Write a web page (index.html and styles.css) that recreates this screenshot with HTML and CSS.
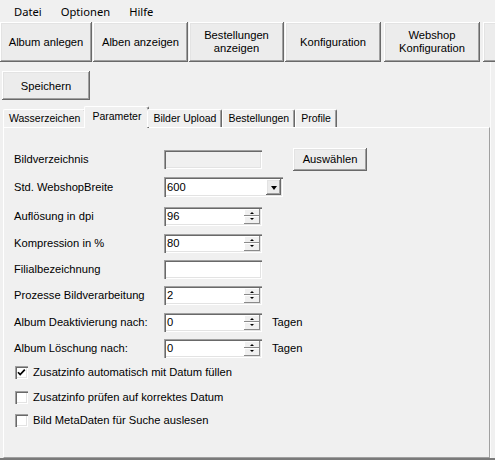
FILE: index.html
```html
<!DOCTYPE html>
<html lang="de">
<head>
<meta charset="utf-8">
<title>Konfiguration</title>
<link rel="stylesheet" href="styles.css">
</head>
<body>
<div class="app">
  <nav class="menubar">
    <span class="menu-item">Datei</span>
    <span class="menu-item">Optionen</span>
    <span class="menu-item">Hilfe</span>
  </nav>
  <div class="toolbar">
    <button class="raised tbtn tb1">Album anlegen</button>
    <button class="raised tbtn tb2">Alben anzeigen</button>
    <button class="raised tbtn tb3">Bestellungen<br>anzeigen</button>
    <button class="raised tbtn tb4">Konfiguration</button>
    <button class="raised tbtn tb5">Webshop<br>Konfiguration</button>
    <button class="raised tbtn tb6"></button>
  </div>
  <main class="content">
    <button class="raised btn save">Speichern</button>
    <div class="tabs">
      <div class="tab">Wasserzeichen</div>
      <div class="tab active">Parameter</div>
      <div class="tab">Bilder Upload</div>
      <div class="tab">Bestellungen</div>
      <div class="tab">Profile</div>
    </div>
    <section class="panel">
      <div class="row first">
        <span class="lbl">Bildverzeichnis</span>
        <div class="field text disabled"></div>
        <button class="raised btn pick">Auswählen</button>
      </div>
      <div class="row tall">
        <span class="lbl">Std. WebshopBreite</span>
        <div class="field combo"><span class="val">600</span><span class="raised dd"><span class="dd-arrow"></span></span></div>
      </div>
      <div class="row mt9">
        <span class="lbl">Auflösung in dpi</span>
        <div class="field spin"><span class="val">96</span><span class="spin-btns"><span class="sb up"></span><span class="sb down"></span></span></div>
      </div>
      <div class="row mt7">
        <span class="lbl">Kompression in %</span>
        <div class="field spin"><span class="val">80</span><span class="spin-btns"><span class="sb up"></span><span class="sb down"></span></span></div>
      </div>
      <div class="row">
        <span class="lbl">Filialbezeichnung</span>
        <div class="field text"></div>
      </div>
      <div class="row">
        <span class="lbl">Prozesse Bildverarbeitung</span>
        <div class="field spin"><span class="val">2</span><span class="spin-btns"><span class="sb up"></span><span class="sb down"></span></span></div>
      </div>
      <div class="row mt7">
        <span class="lbl">Album Deaktivierung nach:</span>
        <div class="field spin"><span class="val">0</span><span class="spin-btns"><span class="sb up"></span><span class="sb down"></span></span></div>
        <span class="unit">Tagen</span>
      </div>
      <div class="row">
        <span class="lbl">Album Löschung nach:</span>
        <div class="field spin"><span class="val">0</span><span class="spin-btns"><span class="sb up"></span><span class="sb down"></span></span></div>
        <span class="unit">Tagen</span>
      </div>
      <div class="row mt4">
        <span class="cb"><svg width="13" height="13" viewBox="0 0 13 13"><polyline points="3,6.2 5.2,8.6 9.8,3.6" fill="none" stroke="#000" stroke-width="1.7"/></svg></span>
        <span class="cb-label">Zusatzinfo automatisch mit Datum füllen</span>
      </div>
      <div class="row mt5">
        <span class="cb"></span>
        <span class="cb-label">Zusatzinfo prüfen auf korrektes Datum</span>
      </div>
      <div class="row mt3">
        <span class="cb"></span>
        <span class="cb-label">Bild MetaDaten für Suche auslesen</span>
      </div>
    </section>
  </main>
</div>
</body>
</html>
```
FILE: styles.css
```css
* { box-sizing: border-box; }
html, body { margin: 0; padding: 0; background: #f0f0f0; }
body {
  width: 495px; height: 460px; overflow: hidden;
  font-family: "Liberation Sans", Arial, sans-serif;
  font-size: 11.2px; color: #000;
}
button { font: inherit; color: inherit; border: 0; margin: 0; padding: 0; cursor: default; }

.app {
  height: 460px; display: flex; flex-direction: column;
  border-bottom: 2px solid #7a7a7a;
}

.raised {
  background: #ececec;
  box-shadow: inset -1px -1px 0 #696969, inset 1px 1px 0 #ffffff,
              inset -2px -2px 0 #a0a0a0, inset 2px 2px 0 #e3e3e3;
}

/* menu */
.menubar {
  height: 22px; flex: none; display: flex; align-items: center;
  padding-left: 4.5px;
  font-family: "Noto Sans", sans-serif; font-size: 11.2px;
}
.menu-item { padding: 0 9.5px; }

/* toolbar */
.toolbar { height: 40px; flex: none; display: flex; gap: 1px; overflow: hidden; }
.tbtn { flex: none; height: 40px; line-height: 13px; text-align: center; }
.tb1 { width: 92px; }
.tb2 { width: 95px; }
.tb3 { width: 95px; }
.tb4 { width: 96px; }
.tb5 { width: 96px; margin-left: 2px; }
.tb6 { width: 96px; margin-left: 2px; }

/* content */
.content {
  flex: 1; display: flex; flex-direction: column;
  padding-left: 2px; width: 491px;
  border-right: 1px solid #fbfbfb;
}
.btn { height: 29px; text-align: center; }
.save { width: 88px; margin-top: 9px; }

.tabs {
  height: 21px; margin-top: 6px; flex: none;
  display: flex; align-items: flex-end; padding-left: 1px;
  position: relative; z-index: 1;
  font-size: 10.5px;
}
.tab {
  height: 18px; padding: 0 5px 1px;
  display: flex; align-items: center; white-space: nowrap;
  border-top: 1px solid #fff; border-left: 1px solid #fff;
  border-right: 1px solid #696969;
  box-shadow: inset -1px 0 0 #a0a0a0;
  border-radius: 2px 2px 0 0;
  background: #f0f0f0;
}
.tab.active {
  height: 22px; margin: 0 -2px -1px; padding: 0 7px 3px;
}

.panel {
  flex: 1; margin-left: 1px;
  border-top: 1px solid #fff; border-left: 1px solid #fff;
  border-right: 1px solid #a0a0a0; border-bottom: 1px solid #a0a0a0;
  padding: 19px 0 0 10px;
}

.row { display: flex; align-items: center; height: 20px; margin-top: 6px; }
.row.first { height: 24px; margin-top: 0; }
.row.mt9 { margin-top: 9px; }
.row.mt7 { margin-top: 7px; }
.row.mt5 { margin-top: 5px; }
.row.mt4 { margin-top: 4px; }
.row.mt3 { margin-top: 3px; }
.lbl { width: 150px; flex: none; white-space: nowrap; }

.field {
  height: 19px; width: 98px; flex: none;
  background: #fff; display: flex; align-items: center;
  padding: 2px 2px 2px 3px;
  box-shadow: inset 1px 1px 0 #a0a0a0, inset 2px 2px 0 #696969,
              inset -1px -1px 0 #ffffff, inset -2px -2px 0 #e3e3e3;
}
.field.disabled { background: #f0f0f0; }
.field.combo { width: 119px; height: 20px; }
.val { flex: 1; }

.pick { width: 74px; height: 23px; margin-left: 31px; }

.dd { width: 15px; height: 16px; display: flex; align-items: center; justify-content: center; }
.dd-arrow {
  width: 0; height: 0;
  border-left: 3.5px solid transparent; border-right: 3.5px solid transparent;
  border-top: 4px solid #000; margin-top: 1px;
}

.spin-btns { width: 16px; height: 15px; display: flex; flex-direction: column; }
.sb {
  flex: 1; position: relative; background: #f0f0f0;
  box-shadow: inset -1px -1px 0 #8a8a8a, inset 1px 1px 0 #fff;
}
.sb::after {
  content: ""; position: absolute; left: 6px; top: 3px;
  width: 0; height: 0;
  border-left: 2px solid transparent; border-right: 2px solid transparent;
}
.sb.up::after { border-bottom: 2px solid #000; }
.sb.down::after { border-top: 2px solid #000; top: 2px; }

.unit { margin-left: 10px; }

.cb {
  width: 13px; height: 13px; flex: none; background: #fff;
  margin-left: 1px; margin-right: 5px; display: block;
  box-shadow: inset 1px 1px 0 #a0a0a0, inset 2px 2px 0 #696969,
              inset -1px -1px 0 #ffffff, inset -2px -2px 0 #e3e3e3;
}
.cb svg { display: block; }
.cb-label { white-space: nowrap; }
```
